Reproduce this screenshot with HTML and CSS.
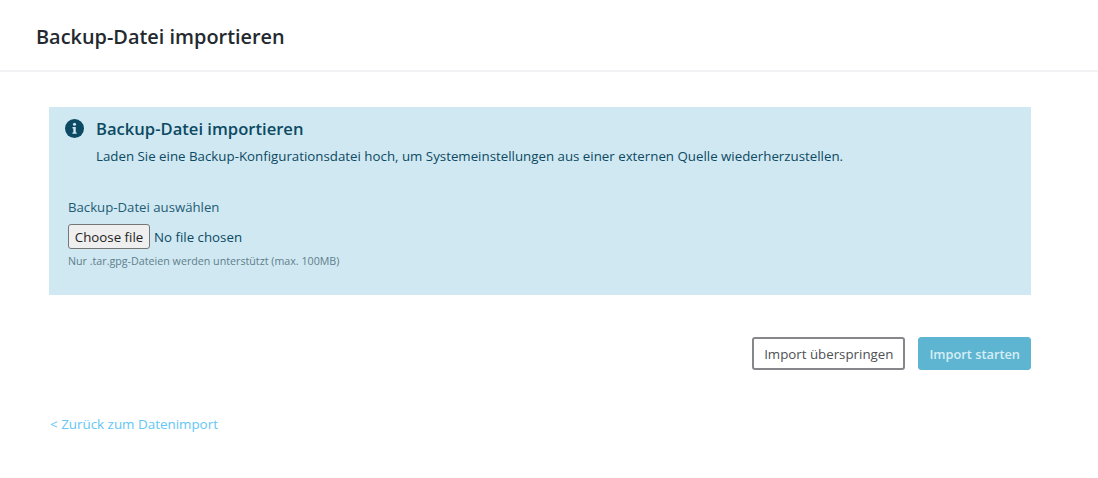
FILE: index.html
```html
<!DOCTYPE html>
<html lang="de">

<head>
    <meta charset="UTF-8">
    <meta name="viewport" content="width=device-width, initial-scale=1.0">
    <title>Backup-Datei importieren</title>
    <link rel="stylesheet" href="styles.css">
</head>

<body>

    <header class="page-header">
        <h1>Backup-Datei importieren</h1>
    </header>

    <main class="content">
        <section class="info-box">
            <div class="info-title">
                <svg class="info-icon" viewBox="0 0 20 20" aria-hidden="true">
                    <circle cx="10" cy="10" r="10" fill="#0c4a63"></circle>
                    <circle cx="10" cy="5.6" r="1.6" fill="#d0e8f2"></circle>
                    <path d="M7.9 8.5h3.4v5.6h1v1.5H7.8v-1.5h1v-4.1h-.9z" fill="#d0e8f2"></path>
                </svg>
                <h2>Backup-Datei importieren</h2>
            </div>
            <p class="info-text">Laden Sie eine Backup-Konfigurationsdatei hoch, um Systemeinstellungen aus einer externen Quelle wiederherzustellen.</p>

            <span class="file-label">Backup-Datei auswählen</span>
            <div class="file-row">
                <button class="file-btn" type="button">Choose file</button>
                <span class="file-name">No file chosen</span>
            </div>
            <small class="file-hint">Nur .tar.gpg-Dateien werden unterstützt (max. 100MB)</small>
        </section>

        <div class="button-section">
            <button class="btn btn-outline" type="button">Import überspringen</button>
            <button class="btn btn-primary" type="button">Import starten</button>
        </div>

        <a class="back-link" href="#">&lt; Zurück zum Datenimport</a>
    </main>

</body>

</html>
```

FILE: styles.css
```css
html,
body {
    margin: 0;
    padding: 0;
    height: 100%;
    overflow: hidden;
    background: #fff;
    font-family: "Open Sans", "Noto Sans", Arial, sans-serif;
}

.page-header {
    display: flex;
    align-items: center;
    box-sizing: border-box;
    height: 72px;
    padding: 2px 0 0 36px;
    border-bottom: 2px solid #f3f3f5;
}

.page-header h1 {
    margin: 0;
    font-size: 19.9px;
    font-weight: 600;
    color: #24292f;
}

.content {
    display: flex;
    flex-direction: column;
    width: 982px;
    margin-left: 49px;
    padding-top: 35px;
}

.info-box {
    display: flex;
    flex-direction: column;
    align-items: flex-start;
    height: 188px;
    box-sizing: border-box;
    padding: 10px 19px 0;
    background: #d0e8f2;
    color: #0c4a63;
}

.info-title {
    display: flex;
    align-items: center;
    gap: 12px;
    margin-left: -3px;
}

.info-icon {
    width: 19px;
    height: 19px;
}

.info-title h2 {
    margin: 0;
    font-size: 16.6px;
    font-weight: 600;
}

.info-text {
    margin: 7px 0 0 28px;
    font-size: 13.3px;
}

.file-label {
    margin-top: 33px;
    font-size: 13.2px;
    color: #1f5c74;
}

.file-row {
    display: flex;
    align-items: center;
    gap: 4px;
    margin-top: 8px;
    font-size: 13.3px;
}

.file-btn {
    width: 82px;
    height: 25px;
    padding: 0;
    font-family: inherit;
    font-size: 13.3px;
    color: #222;
    background: #efefef;
    border: 1px solid #767676;
    border-radius: 3px;
}

.file-hint {
    margin-top: 5px;
    font-size: 10.7px;
    color: #5f7f8d;
}

.button-section {
    display: flex;
    justify-content: flex-end;
    gap: 13px;
    margin-top: 42px;
}

.btn {
    height: 33px;
    padding: 0 10px;
    font-family: inherit;
    font-size: 13.3px;
    border-radius: 3px;
    cursor: pointer;
}

.btn-outline {
    color: #4d4f53;
    background: #fff;
    border: 2px solid #87878b;
}

.btn-primary {
    font-size: 12.8px;
    font-weight: 600;
    color: #d7eef5;
    background: #5eb5d2;
    border: 1px solid #5eb5d2;
}

.back-link {
    align-self: flex-start;
    margin: 45px 0 0 1px;
    font-size: 13.4px;
    color: #63c6f5;
    text-decoration: none;
}
```
